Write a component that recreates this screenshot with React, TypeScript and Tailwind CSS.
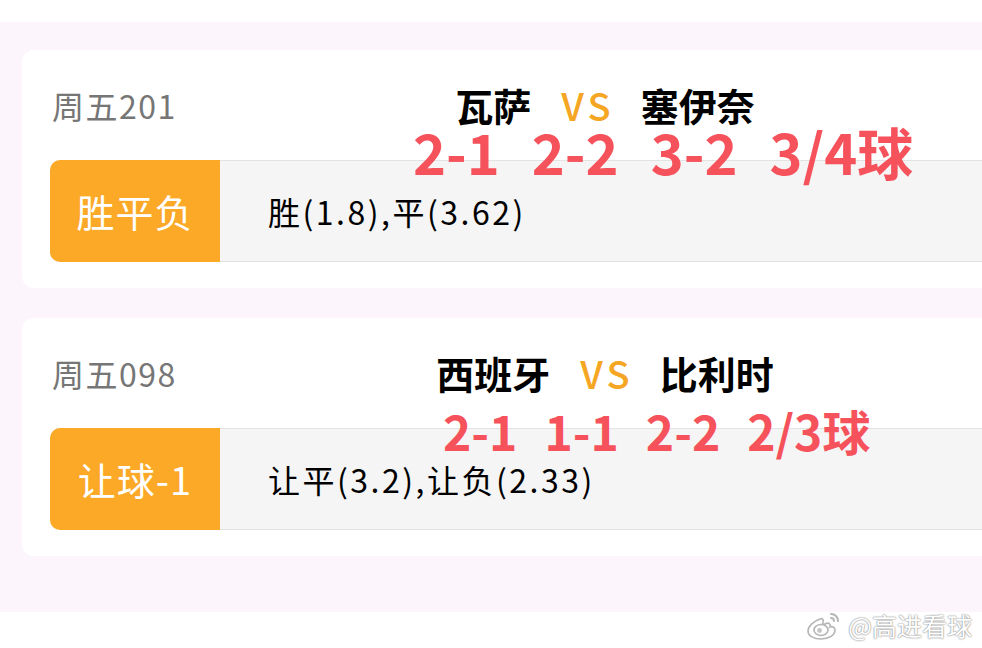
const font = "font-['Noto_Sans_CJK_SC','Noto_Sans',sans-serif]";

type Match = {
  code: string;
  home: string;
  away: string;
  market: string;
  odds: string;
  picks: string[];
  picksClass: string;
};

const matches: Match[] = [
  {
    code: "周五201",
    home: "瓦萨",
    away: "塞伊奈",
    market: "胜平负",
    odds: "胜(1.8),平(3.62)",
    picks: ["2-1", "2-2", "3-2", "3/4球"],
    picksClass: "left-[391px] top-[73px] gap-[32px] text-[56px]",
  },
  {
    code: "周五098",
    home: "西班牙",
    away: "比利时",
    market: "让球-1",
    odds: "让平(3.2),让负(2.33)",
    picks: ["2-1", "1-1", "2-2", "2/3球"],
    picksClass: "left-[421px] top-[88px] gap-[27px] text-[48px]",
  },
];

function WeiboLogo() {
  return (
    <svg width="40" height="30" viewBox="0 0 40 30" fill="none">
      <path
        d="M16 9c-6 2-12 7-12 12 0 5 6 8 13 8 8 0 14-4 14-9 0-3-3-4-5-3 1-3-1-5-5-3-2 1-3 1-2-1 1-4-1-5-3-4z"
        fill="#fff"
        stroke="#b5b5b5"
        strokeWidth="1.6"
      />
      <ellipse cx="17" cy="20" rx="7" ry="5.5" fill="#fff" stroke="#b5b5b5" strokeWidth="1.6" />
      <circle cx="15.5" cy="20.5" r="2.4" fill="#c4c4c4" />
      <path d="M27 4c4 0 7 3 7 7" stroke="#b5b5b5" strokeWidth="2" strokeLinecap="round" />
      <path d="M27 8c2 0 3 1 3 3" stroke="#b5b5b5" strokeWidth="2" strokeLinecap="round" />
    </svg>
  );
}

function MatchCard({ m }: { m: Match }) {
  return (
    <div className="relative h-[238px] w-[1000px] shrink-0 rounded-[12px] bg-white px-[28px]">
      <div className="flex h-[110px] items-center">
        <div className="w-[232px] pl-[2px] text-[32px] leading-none tracking-[1.5px] text-[#767676]">
          {m.code}
        </div>
        <div className="flex w-[646px] items-center justify-center gap-[30px] text-[38px] font-bold leading-none text-black">
          <span>{m.home}</span>
          <span className="-mr-[4px] font-medium tracking-[4px] text-[#f5a623]">VS</span>
          <span>{m.away}</span>
        </div>
      </div>

      <div className="flex h-[102px]">
        <div className="flex w-[170px] items-center justify-center rounded-l-[10px] bg-[#fba927] text-[38px] leading-none tracking-[1px] text-white">
          {m.market}
        </div>
        <div className="flex flex-1 items-center border-y border-[#e3e3e3] bg-[#f5f5f5] pl-[48px] text-[32px] leading-none tracking-[2.5px] text-black">
          {m.odds}
        </div>
      </div>

      <div className={`absolute ${m.picksClass} flex font-bold leading-none text-[#f5525c]`}>
        {m.picks.map((p) => (
          <span key={p}>{p}</span>
        ))}
      </div>
    </div>
  );
}

export default function App() {
  return (
    <div className={`relative h-[648px] w-[982px] overflow-hidden bg-white ${font}`}>
      <div className="mt-[22px] flex h-[590px] flex-col gap-[30px] bg-[#fcf6fc] pl-[22px] pt-[28px]">
        {matches.map((m) => (
          <MatchCard key={m.code} m={m} />
        ))}
      </div>

      <div className="absolute bottom-[8px] right-[10px] flex items-center gap-[4px] text-[25px] leading-none text-white [text-shadow:0_0_2px_#8a8a8a,0_0_1px_#8a8a8a]">
        <WeiboLogo />
        <span>@高进看球</span>
      </div>
    </div>
  );
}
